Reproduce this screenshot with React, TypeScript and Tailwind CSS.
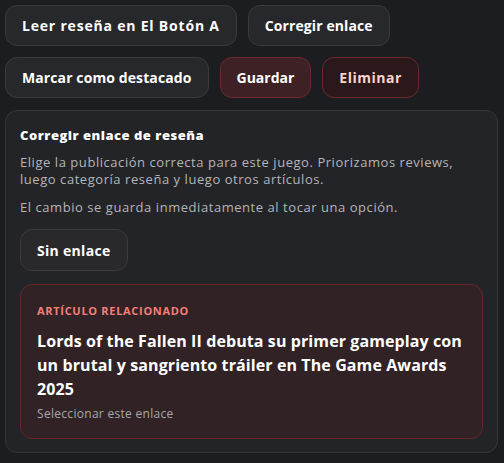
import { useState } from 'react';

const font = { fontFamily: '"Open Sans", "DejaVu Sans", sans-serif' };

function ActionButton({
  children,
  tone = 'neutral',
  spacing = 'tracking-[0.3px]',
}: {
  children: React.ReactNode;
  tone?: 'neutral' | 'save' | 'danger';
  spacing?: string;
}) {
  const tones = {
    neutral: 'bg-[#27282b] border-[#3a3b3e] text-white',
    save: 'bg-[#3e2124] border-[#6c2a2e] text-white',
    danger: 'bg-[#2b181b] border-[#6c2a2e] text-[#fcd2d2]',
  };
  return (
    <button className={`h-[41px] rounded-xl border px-4 text-[14px] font-bold ${spacing} ${tones[tone]}`}>
      {children}
    </button>
  );
}

export default function App() {
  const [selected, setSelected] = useState<string | null>(null);

  return (
    <div className="min-h-screen bg-[#1c1d20] p-[5px]" style={font}>
      <div className="flex flex-wrap gap-x-[11px] gap-y-[11px]">
        <ActionButton spacing="tracking-[0.8px]">Leer reseña en El Botón A</ActionButton>
        <ActionButton spacing="tracking-[0.1px]">Corregir enlace</ActionButton>
        <ActionButton spacing="tracking-[0.1px]">Marcar como destacado</ActionButton>
        <ActionButton tone="save" spacing="tracking-normal">Guardar</ActionButton>
        <ActionButton tone="danger" spacing="tracking-[0.5px]">Eliminar</ActionButton>
      </div>

      <div className="mt-[12px] w-[493px] rounded-xl border border-[#353639] bg-[#232427] px-[14px] pt-[15px] pb-[13px]">
        <h2 className="text-[13px] font-extrabold leading-[19px] tracking-[0.5px] text-white">
          Corregir enlace de reseña
        </h2>
        <p className="mt-[9px] text-[13px] leading-[17px] tracking-[0.55px] text-[#b3b5b8]">
          Elige la publicación correcta para este juego. Priorizamos reviews, luego categoría reseña y luego otros artículos.
        </p>
        <p className="mt-[11px] text-[13px] leading-[17px] tracking-[0.55px] text-[#b3b5b8]">
          El cambio se guarda inmediatamente al tocar una opción.
        </p>

        <button
          onClick={() => setSelected(null)}
          className="mt-[13px] h-[42px] rounded-xl border border-[#3a3b3e] bg-[#29292c] px-4 text-[14px] font-bold tracking-[0.3px] text-white"
        >
          Sin enlace
        </button>

        <div
          onClick={() => setSelected('lotf2')}
          className="mt-[13px] cursor-pointer rounded-xl border border-[#6a2429] bg-[#312226] px-4 pt-[18px] pb-[15px]"
          data-selected={selected === 'lotf2'}
        >
          <div className="text-[11px] font-bold uppercase leading-4 tracking-[0.7px] text-[#f47f76]">
            Artículo relacionado
          </div>
          <div className="mt-[10px] text-[16px] font-bold leading-[24px] tracking-[0.1px] text-white">
            Lords of the Fallen II debuta su primer gameplay con un brutal y sangriento tráiler en The Game Awards 2025
          </div>
          <div className="mt-[4px] text-[12px] leading-[18px] tracking-[0.3px] text-[#a6a8ab]">
            Seleccionar este enlace
          </div>
        </div>
      </div>
    </div>
  );
}
